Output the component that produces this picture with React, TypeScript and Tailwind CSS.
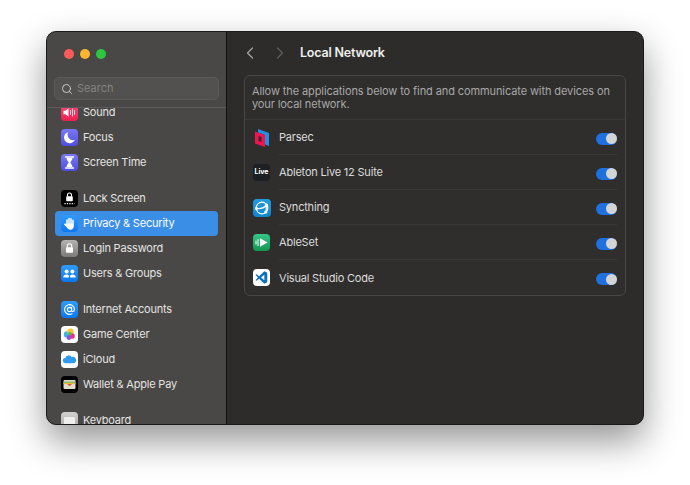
import { ChevronLeft, ChevronRight, Search } from "lucide-react";
import type { ReactNode } from "react";

function Tile({ className, children }: { className: string; children: ReactNode }) {
  return (
    <div className={`flex h-[17px] w-[17px] shrink-0 items-center justify-center overflow-hidden rounded-[4px] ${className}`}>
      {children}
    </div>
  );
}

const soundIcon = (
  <Tile className="bg-gradient-to-b from-[#f9487a] to-[#ea1f4e]">
    <svg viewBox="0 0 17 17" className="h-[17px] w-[17px]">
      <path d="M2.500 6.800h2l3-2.600v8.600l-3-2.600h-2z" fill="#fff" />
      <path d="M9.500 6.500v4M11.500 5v7M13.500 6.500v4" stroke="#fff" strokeWidth="1" strokeLinecap="round" opacity="0.75" />
    </svg>
  </Tile>
);
const focusIcon = (
  <Tile className="bg-gradient-to-b from-[#7a78f5] to-[#4f4de0]">
    <svg viewBox="0 0 17 17" className="h-[17px] w-[17px]">
      <path d="M7.200 3.200a5.600 5.600 0 1 0 6.600 7.600A5.400 5.400 0 0 1 7.200 3.200z" fill="#fff" />
    </svg>
  </Tile>
);
const screenTimeIcon = (
  <Tile className="bg-gradient-to-b from-[#7a78f5] to-[#4f4de0]">
    <svg viewBox="0 0 17 17" className="h-[17px] w-[17px]">
      <path d="M4.500 3h8M4.500 14h8" stroke="#fff" strokeWidth="1.400" strokeLinecap="round" />
      <path d="M5.500 4h6c0 2.200-2 3.400-2.200 4.500.2 1.100 2.200 2.300 2.200 4.500h-6c0-2.200 2-3.400 2.200-4.500C7.500 7.400 5.500 6.200 5.500 4z" fill="#fff" />
    </svg>
  </Tile>
);
const lockScreenIcon = (
  <Tile className="bg-black">
    <svg viewBox="0 0 17 17" className="h-[17px] w-[17px]">
      <path d="M6.500 6.500V5a2 2 0 0 1 4 0v1.500" stroke="#fff" strokeWidth="1.100" fill="none" />
      <rect x="5.200" y="6.300" width="6.600" height="5" rx="0.800" fill="#fff" />
      <path d="M3.500 13.600h10" stroke="#fff" strokeWidth="1.200" strokeDasharray="1.200 1.200" />
    </svg>
  </Tile>
);
const privacyIcon = (
  <Tile className="bg-gradient-to-b from-[#2f9bf9] to-[#0a78f0]">
    <svg viewBox="0 0 17 17" className="h-[17px] w-[17px]">
      <path d="M6 9.500V5M8 9V3.500M10 9V3.800M12 9.500V5.200" stroke="#fff" strokeWidth="1.500" strokeLinecap="round" />
      <path d="M5.300 8.500h7.500V11c0 2.300-1.500 3.700-3.500 3.700-1.700 0-2.500-.8-3.300-2.100L3.300 9.900c-.6-1 .7-1.800 1.400-1z" fill="#fff" />
    </svg>
  </Tile>
);
const loginIcon = (
  <Tile className="bg-gradient-to-b from-[#b5b4b3] to-[#7c7b7a]">
    <svg viewBox="0 0 17 17" className="h-[17px] w-[17px]">
      <path d="M6.300 7.500V6a2.200 2.200 0 0 1 4.400 0v1.500" stroke="#fff" strokeWidth="1.100" fill="none" />
      <rect x="5" y="7.300" width="7" height="5.500" rx="0.800" fill="#fff" />
    </svg>
  </Tile>
);
const usersIcon = (
  <Tile className="bg-gradient-to-b from-[#2f9bf9] to-[#0a78f0]">
    <svg viewBox="0 0 17 17" className="h-[17px] w-[17px]" fill="#fff">
      <circle cx="5.600" cy="6.400" r="2" />
      <circle cx="11.400" cy="6.400" r="2" />
      <path d="M2.200 12.400c0-2 1.500-3 3.400-3s3 1 2.200 3zM9.200 12.400c-.8-2 .3-3 2.200-3s3.400 1 3.400 3z" />
    </svg>
  </Tile>
);
const internetIcon = (
  <Tile className="bg-gradient-to-b from-[#2f9bf9] to-[#0a78f0]">
    <svg viewBox="0 0 17 17" className="h-[17px] w-[17px]" fill="none" stroke="#fff" strokeWidth="1.100">
      <circle cx="8.500" cy="8.500" r="2.100" />
      <path d="M10.600 6.400v3c0 1.700 2.800 1.500 2.800-1A4.900 4.900 0 1 0 11 12.700" strokeLinecap="round" />
    </svg>
  </Tile>
);
const gameCenterIcon = (
  <Tile className="bg-white">
    <svg viewBox="0 0 17 17" className="h-[17px] w-[17px]">
      <circle cx="6" cy="8.500" r="3.200" fill="#3cb6ea" />
      <circle cx="9.500" cy="5.800" r="3.200" fill="#f7c531" />
      <circle cx="11" cy="10" r="2.800" fill="#ee2f7d" />
      <circle cx="8" cy="11.500" r="2.400" fill="#9a4be0" />
      <circle cx="9" cy="7.800" r="1.800" fill="#4dbb5a" />
    </svg>
  </Tile>
);
const icloudIcon = (
  <Tile className="bg-white">
    <svg viewBox="0 0 17 17" className="h-[17px] w-[17px]">
      <path d="M4.600 12.300a2.600 2.600 0 0 1-.3-5.200 3.400 3.400 0 0 1 6.300-1 2.900 2.900 0 0 1 2.300 6.200z" fill="#2f9bee" />
    </svg>
  </Tile>
);
const walletIcon = (
  <Tile className="bg-black">
    <svg viewBox="0 0 17 17" className="h-[17px] w-[17px]">
      <rect x="2.500" y="4" width="12" height="9" rx="1" fill="#e2dccb" />
      <rect x="2.500" y="5.600" width="12" height="1.200" fill="#5fb55c" />
      <rect x="2.500" y="6.800" width="12" height="1.200" fill="#f0b72f" />
      <path d="M6 8h5l-2.500 2.200z" fill="#e5533d" />
    </svg>
  </Tile>
);
const keyboardIcon = (
  <Tile className="bg-gradient-to-b from-[#d2d1d0] to-[#a9a8a7]">
    <div className="h-[8px] w-[11px] rounded-[1px] bg-[#eeeeed]" />
  </Tile>
);

function NavItem({ icon, label, active }: { icon: ReactNode; label: string; active?: boolean }) {
  return (
    <div className={`flex h-[25px] items-center gap-[5px] rounded-[4px] pl-[6px] text-[11px] tracking-[-0.2px] ${active ? "bg-[#3a8ee6] text-white" : "text-[#e4e3e2]"}`}>
      {icon}
      <span>{label}</span>
    </div>
  );
}

function Toggle() {
  return (
    <div className="mt-[3px] flex h-[12px] w-[21px] items-center justify-end rounded-full bg-[#1f71e0] pr-[0.500px]">
      <div className="h-[11px] w-[11px] rounded-full bg-[#d4d4d4]" />
    </div>
  );
}

function AppRow({ icon, name, last }: { icon: ReactNode; name: string; last?: boolean }) {
  return (
    <div className="flex h-[35px] items-center pl-[8px] pr-[8px]">
      <div className="flex w-[26px] shrink-0 items-center">{icon}</div>
      <div className={`flex h-full flex-1 items-center justify-between ${last ? "" : "border-b border-[#3a3938]"}`}>
        <span className="pt-px text-[11px] tracking-[-0.2px] text-[#dddcdb]">{name}</span>
        <Toggle />
      </div>
    </div>
  );
}

const parsecIcon = (
  <svg viewBox="0 0 18 20" className="h-[20px] w-[18px]">
    <path d="M5 1l11 4v13l-4-1.500V7L5 4.500z" fill="#1f8fe8" />
    <path fillRule="evenodd" d="M2 3.500l10 3.500V19L2 15.500zM5.500 8v5l3 1V9z" fill="#f2144f" />
  </svg>
);
const liveIcon = (
  <div className="flex h-[17px] w-[17px] items-center justify-center rounded-[4px] bg-[#1c1f24] text-[7px] font-bold text-white">
    Live
  </div>
);
const syncthingIcon = (
  <div className="flex h-[18px] w-[18px] items-center justify-center rounded-[4px] bg-gradient-to-b from-[#1f9be0] to-[#0f86cc]">
    <svg viewBox="0 0 18 18" className="h-[18px] w-[18px]" fill="none" stroke="#fff" strokeWidth="1.200">
      <circle cx="9" cy="9" r="5.800" />
      <path d="M3.500 9.500c4 .5 7.500-.5 10-3.500M13.500 6l-.5 7" />
      <circle cx="13.500" cy="6" r="1" fill="#fff" />
      <circle cx="3.500" cy="9.500" r="1" fill="#fff" />
      <circle cx="12.800" cy="13" r="1" fill="#fff" />
    </svg>
  </div>
);
const ablesetIcon = (
  <div className="flex h-[17px] w-[17px] items-center justify-center rounded-[4px] bg-gradient-to-b from-[#36c78a] to-[#12964f]">
    <svg viewBox="0 0 17 17" className="h-[17px] w-[17px]">
      <path d="M3 7v3M5 5.500v6" stroke="#d8f6e6" strokeWidth="1.200" strokeLinecap="round" />
      <path d="M7 4.300l7.500 4.200L7 12.700z" fill="#fff" />
    </svg>
  </div>
);
const vscodeIcon = (
  <div className="flex h-[17px] w-[17px] items-center justify-center rounded-[4px] bg-white">
    <svg viewBox="0 0 17 17" className="h-[15px] w-[15px]">
      <path d="M11.700 1.500L15 3v11l-3.300 1.500L5.800 10 3 12.200 1.700 11.500 4.500 8.500 1.700 5.500 3 4.800 5.800 7zM11.700 5.500L8 8.500l3.700 3z" fill="#0b6fc2" fillRule="evenodd" />
    </svg>
  </div>
);

export default function App() {
  return (
    <div className="h-[485px] w-[690px] overflow-hidden bg-white pl-[46px] pt-[31px] font-['Inter','Liberation_Sans',sans-serif]">
      <div className="flex h-[394px] w-[598px] overflow-hidden rounded-[10px] border border-[#1b1a1a] bg-[#2d2c2b] shadow-[0_16px_36px_rgba(0,0,0,0.42)]">
        <aside className="flex w-[180px] shrink-0 flex-col border-r border-[#111] bg-[#4a4846]">
          <div className="flex gap-[6px] pl-[17px] pt-[17px]">
            <div className="h-[10px] w-[10px] rounded-full bg-[#fc5b57]" />
            <div className="h-[10px] w-[10px] rounded-full bg-[#fdb62e]" />
            <div className="h-[10px] w-[10px] rounded-full bg-[#2bc840]" />
          </div>
          <div className="mx-[7px] mt-[18px] flex h-[23px] items-center gap-[4px] rounded-[5px] border border-[#5c5a58] bg-[#53514f] pl-[6px] text-[11px] text-[#84827f]">
            <Search size={12} strokeWidth={1.800} className="text-[#d5d4d3]" />
            <span>Search</span>
          </div>
          <div className="mt-[7px] flex-1 overflow-hidden border-t border-[#5c5a58]">
            <div className="-mt-[8px] flex flex-col gap-[11px] px-[8px]">
              <div>
                <NavItem icon={soundIcon} label="Sound" />
                <NavItem icon={focusIcon} label="Focus" />
                <NavItem icon={screenTimeIcon} label="Screen Time" />
              </div>
              <div>
                <NavItem icon={lockScreenIcon} label="Lock Screen" />
                <NavItem icon={privacyIcon} label="Privacy & Security" active />
                <NavItem icon={loginIcon} label="Login Password" />
                <NavItem icon={usersIcon} label="Users & Groups" />
              </div>
              <div>
                <NavItem icon={internetIcon} label="Internet Accounts" />
                <NavItem icon={gameCenterIcon} label="Game Center" />
                <NavItem icon={icloudIcon} label="iCloud" />
                <NavItem icon={walletIcon} label="Wallet & Apple Pay" />
              </div>
              <NavItem icon={keyboardIcon} label="Keyboard" />
            </div>
          </div>
        </aside>
        <main className="flex-1 px-[17px]">
          <div className="flex h-[43px] items-center">
            <ChevronLeft size={20} strokeWidth={1.500} className="-ml-[4px] -mt-[1px] text-[#a5a4a3]" />
            <ChevronRight size={20} strokeWidth={1.500} className="ml-[10px] -mt-[1px] text-[#5f5e5d]" />
            <span className="ml-[10px] text-[12.500px] font-semibold tracking-[-0.2px] text-[#eeeeed]">Local Network</span>
          </div>
          <div className="rounded-[6px] border border-[#484746] bg-[#2f2e2d]">
            <div className="h-[44px] border-b border-[#3a3938] px-[7px] pt-[9px] text-[11px] leading-[13px] tracking-[-0.1px] text-[#a9a8a7]">
              Allow the applications below to find and communicate with devices on your local network.
            </div>
            <AppRow icon={parsecIcon} name="Parsec" />
            <AppRow icon={liveIcon} name="Ableton Live 12 Suite" />
            <AppRow icon={syncthingIcon} name="Syncthing" />
            <AppRow icon={ablesetIcon} name="AbleSet" />
            <AppRow icon={vscodeIcon} name="Visual Studio Code" last />
          </div>
        </main>
      </div>
    </div>
  );
}
